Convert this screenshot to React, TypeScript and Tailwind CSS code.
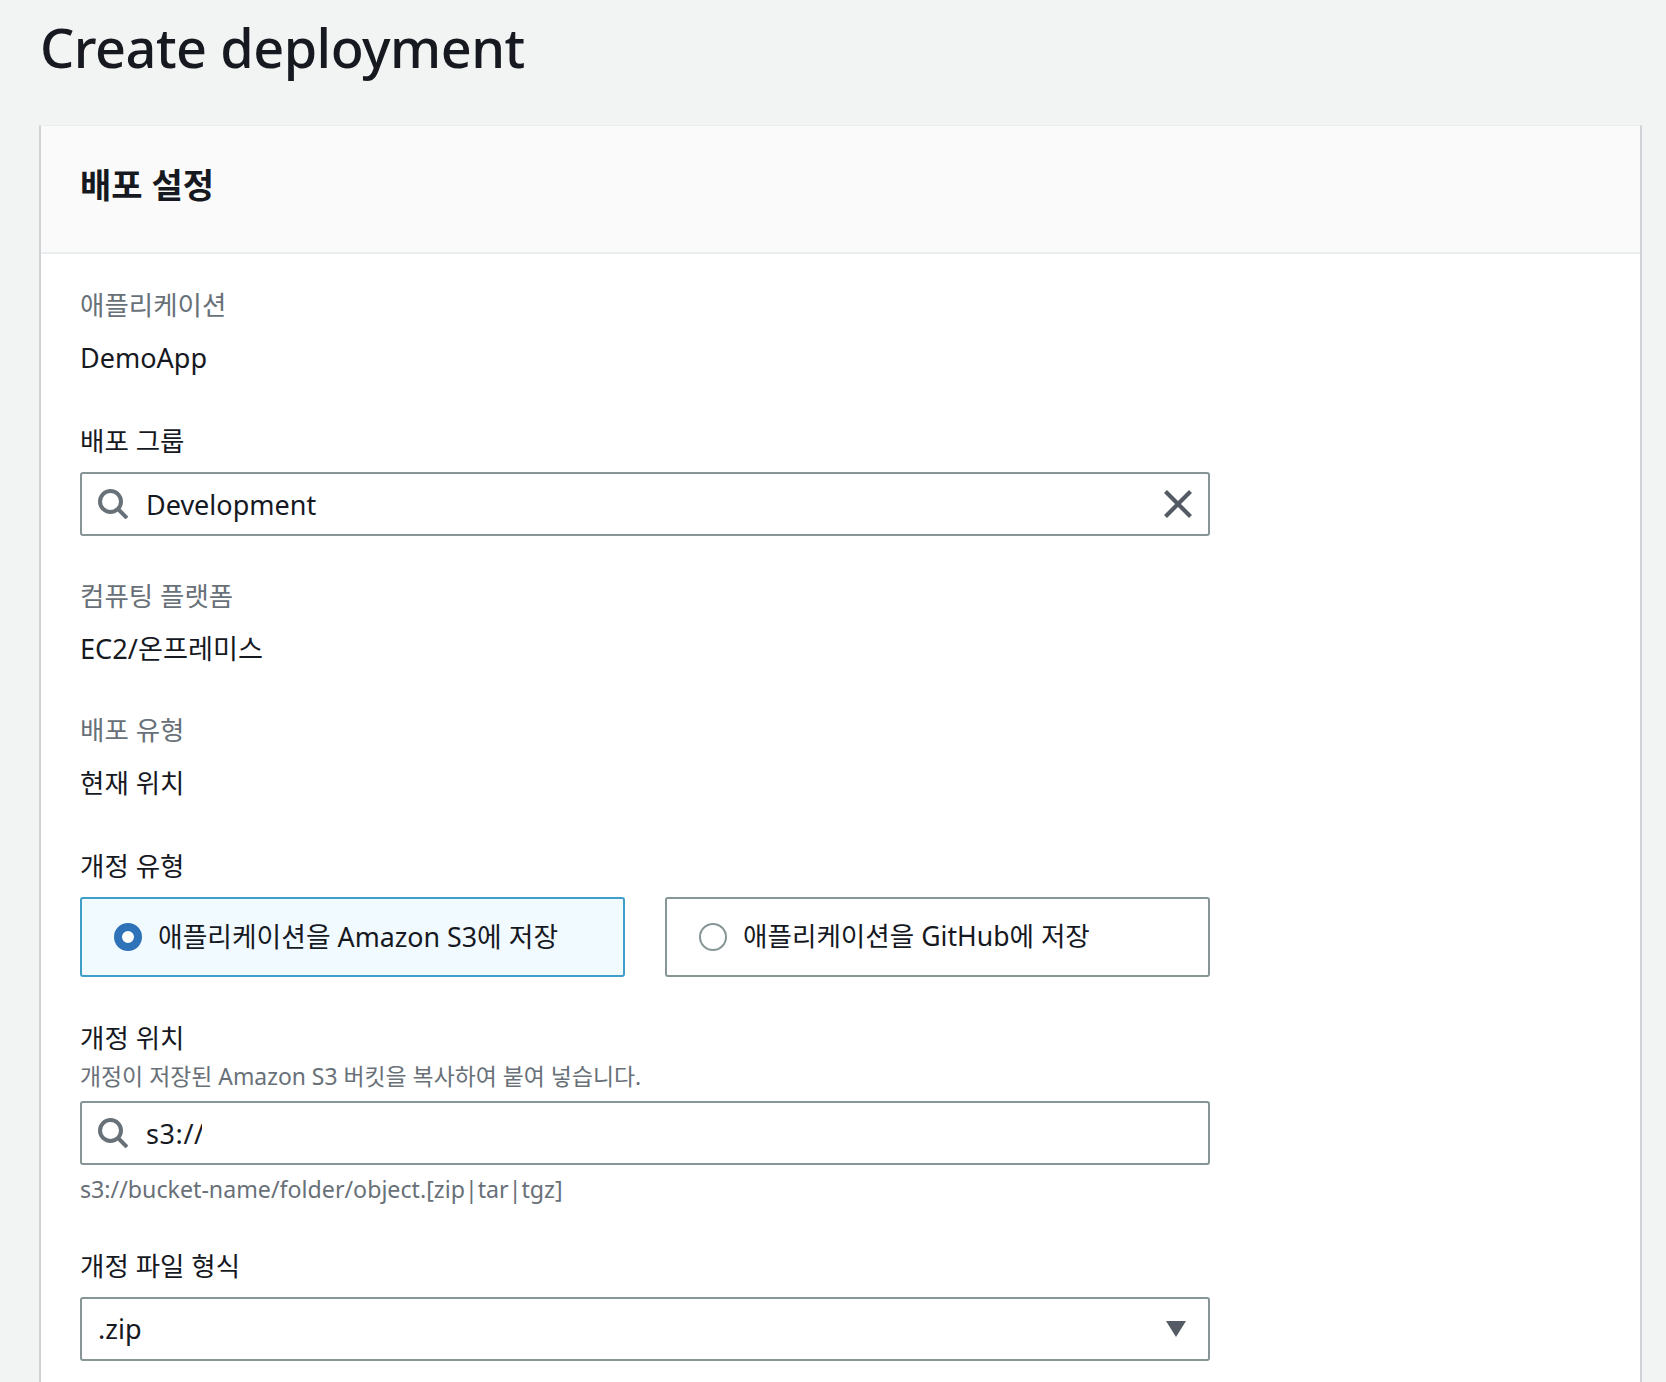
const FONT = "font-['Noto_Sans','Noto_Sans_CJK_KR',sans-serif]"

function SearchIcon() {
  return (
    <svg width="30" height="30" viewBox="0 0 30 30" fill="none" stroke="#687078" strokeWidth="4" className="shrink-0">
      <circle cx="12.5" cy="12.5" r="10.5" />
      <path d="M20 20 L29 29" />
    </svg>
  )
}

function TextInput({ value, clear, clip }: { value: string; clear?: boolean; clip?: boolean }) {
  return (
    <div className="flex h-[64px] w-[1130px] items-center rounded-[3px] border-2 border-[#879596] bg-white pl-[16px] pr-[15px]">
      <SearchIcon />
      <div className="ml-[18px] flex-1 pt-[2px]">
        {/* caret sits over the last slash in the reference */}
        <div className={`text-[27px] text-[#16191f] ${clip ? "w-[56px] overflow-hidden whitespace-nowrap tracking-[0.6px]" : ""}`}>{value}</div>
      </div>
      {clear && (
        <svg width="30" height="30" viewBox="0 0 30 30" fill="none" stroke="#545b64" strokeWidth="4.2" className="shrink-0">
          <path d="M2.5 2.5 L27.5 27.5 M27.5 2.5 L2.5 27.5" />
        </svg>
      )}
    </div>
  )
}

function Label({ children, muted, className = "" }: { children: string; muted?: boolean; className?: string }) {
  return (
    <div className={`h-[38px] text-[26.5px] leading-[38px] ${muted ? "text-[#687078]" : "text-[#16191f]"} ${className}`}>
      {children}
    </div>
  )
}

function Value({ children, className = "text-[26.5px]" }: { children: string; className?: string }) {
  return <div className={`mt-[15px] h-[38px] leading-[38px] text-[#16191f] ${className}`}>{children}</div>
}

export default function App() {
  return (
    <div className={`h-[1382px] overflow-hidden bg-[#f2f3f3] ${FONT}`}>
      <h1 className="pl-[40px] pt-[10px] text-[54px] font-medium leading-[74px] tracking-[-0.5px] text-[#16191f]">Create deployment</h1>

      <div className="ml-[39px] mt-[41px] w-[1603px] border-x-2 border-t border-x-[#cfd3d7] border-t-[#eaeded] bg-white pb-[60px]">
        <div className="flex h-[128px] items-center border-b-2 border-[#eaeded] bg-[#fafafa] pb-[8px] pl-[39px]">
          <h2 className="text-[34px] font-bold text-[#16191f]">배포 설정</h2>
        </div>

        <div className="flex flex-col pl-[39px] pt-[32px]">
          <Label muted>애플리케이션</Label>
          <Value className="text-[27px]">DemoApp</Value>

          <Label className="mb-[12px] mt-[45px]">배포 그룹</Label>
          <TextInput value="Development" clear />

          <Label muted className="mt-[41px]">컴퓨팅 플랫폼</Label>
          <Value className="text-[27.2px]">EC2/온프레미스</Value>

          <Label muted className="mt-[43px]">배포 유형</Label>
          <Value>현재 위치</Value>

          <Label className="mb-[12px] mt-[45px]">개정 유형</Label>
          <div className="flex w-[1130px] gap-[40px]">
            <div className="flex h-[80px] w-[545px] items-center rounded-[3px] border-2 border-[#3f9fc8] bg-[#f1faff] pl-[32px]">
              <span className="h-[28px] w-[28px] rounded-full border-[8px] border-[#2e73b8] bg-white" />
              <span className="ml-[16px] text-[26.8px] text-[#16191f]">애플리케이션을 Amazon S3에 저장</span>
            </div>
            <div className="flex h-[80px] w-[545px] items-center rounded-[3px] border-2 border-[#879596] bg-white pl-[32px]">
              <span className="h-[28px] w-[28px] rounded-full border-2 border-[#879596] bg-white" />
              <span className="ml-[16px] text-[26.6px] text-[#16191f]">애플리케이션을 GitHub에 저장</span>
            </div>
          </div>

          <Label className="mt-[42px]">개정 위치</Label>
          <div className="mb-[8px] mt-[4px] h-[32px] text-[22.9px] leading-[32px] text-[#687078]">
            개정이 저장된 Amazon S3 버킷을 복사하여 붙여 넣습니다.
          </div>
          <TextInput value="s3://" clip />
          <div className="mt-[8px] h-[32px] text-[23.2px] leading-[32px] text-[#687078]">
            s3://bucket-name/folder/object.[zip|tar|tgz]
          </div>

          <Label className="mb-[12px] mt-[42px]">개정 파일 형식</Label>
          <div className="flex h-[64px] w-[1130px] items-center justify-between rounded-[3px] border-2 border-[#879596] bg-white pl-[16px] pr-[21px]">
            <span className="text-[27px] text-[#16191f]">.zip</span>
            <svg width="22" height="18" viewBox="0 0 22 18" fill="#545b64">
              <path d="M1 1 H21 L11 17 Z" />
            </svg>
          </div>
        </div>
      </div>
    </div>
  )
}
